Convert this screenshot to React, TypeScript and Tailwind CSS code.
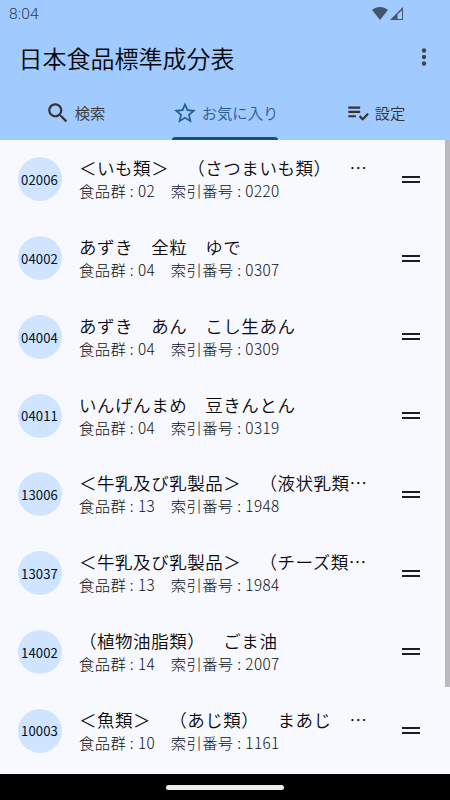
import { useState } from "react";
import clsx from "clsx";

type Food = {
  id: string;
  name: string;
  group: string;
  index: string;
};

const foods: Food[] = [
  { id: "02006", name: "＜いも類＞　（さつまいも類）　…", group: "02", index: "0220" },
  { id: "04002", name: "あずき　全粒　ゆで", group: "04", index: "0307" },
  { id: "04004", name: "あずき　あん　こし生あん", group: "04", index: "0309" },
  { id: "04011", name: "いんげんまめ　豆きんとん", group: "04", index: "0319" },
  { id: "13006", name: "＜牛乳及び乳製品＞　（液状乳類…", group: "13", index: "1948" },
  { id: "13037", name: "＜牛乳及び乳製品＞　（チーズ類…", group: "13", index: "1984" },
  { id: "14002", name: "（植物油脂類）　ごま油", group: "14", index: "2007" },
  { id: "10003", name: "＜魚類＞　（あじ類）　まあじ　…", group: "10", index: "1161" },
];

const tabs = [
  {
    label: "検索",
    path: "M15.5 14h-.79l-.28-.27C15.41 12.59 16 11.11 16 9.5 16 5.91 13.09 3 9.5 3S3 5.91 3 9.5 5.91 16 9.5 16c1.61 0 3.09-.59 4.23-1.57l.27.28v.79l5 4.99L20.49 19l-4.99-5zm-6 0C7.01 14 5 11.99 5 9.5S7.01 5 9.5 5 14 7.01 14 9.5 11.99 14 9.5 14z",
  },
  {
    label: "お気に入り",
    path: "M22 9.24l-7.19-.62L12 2 9.19 8.63 2 9.24l5.46 4.73L5.82 21 12 17.27 18.18 21l-1.63-7.03L22 9.24zM12 15.4l-3.76 2.27 1-4.28-3.32-2.88 4.38-.38L12 6.1l1.71 4.04 4.38.38-3.32 2.88 1 4.28L12 15.4z",
  },
  {
    label: "設定",
    path: "M3 10h11v2H3v-2zm0-4h11v2H3V6zm0 8h7v2H3v-2zm17.590-1.930-4.250 4.240-2.120-2.120-1.410 1.410 3.530 3.540L22 13.480z",
  },
];

const StatusBar = () => (
  <div className="flex h-[26px] items-center justify-between pl-[9px] pr-[47px] text-[#43566c]">
    <span className="pt-[3px] font-[Roboto] text-[15.5px] leading-none font-light tracking-[0.2px] text-[#2b3c52]">
      8:04
    </span>
    <div className="flex items-center gap-[2px]">
      <svg className="h-[13px] w-4" viewBox="0 0 16 13" fill="currentColor">
        <path d="M8 13 0 3C2.200 1 5 0 8 0s5.800 1 8 3z" />
      </svg>
      <svg className="h-[13px] w-[13px]" viewBox="0 0 13 13">
        <path d="M0 13 13 0v13z" fill="currentColor" />
        <path d="M7.500 7.500 12 3.200v8.800H7.500z" fill="#a1caff" />
      </svg>
    </div>
  </div>
);

const FoodRow = ({ food }: { food: Food }) => (
  <li className="flex h-[78.75px] shrink-0 items-center pl-[17.5px] pr-[30px]">
    <div className="flex size-[44px] shrink-0 items-center justify-center rounded-full bg-[#cfe4ff] pt-px text-[13.125px] font-normal tracking-[0.1px] text-[#00101f]">
      {food.id}
    </div>
    <div className="ml-[17.5px] flex-1 whitespace-nowrap pb-[3px] [text-spacing-trim:space-all]">
      <p className="text-[17.5px] leading-[25px] tracking-[0.54px] text-[#08090b]">{food.name}</p>
      <p className="text-[15.3px] leading-[20px] font-light tracking-[0.4px] text-[#0c0f13]">
        食品群 : {food.group}　索引番号 : {food.index}
      </p>
    </div>
    {/* Drag handle */}
    <div className="flex w-[18px] shrink-0 flex-col gap-[3px]">
      <span className="h-[2px] bg-[#1a1c2a]" />
      <span className="h-[2px] bg-[#1a1c2a]" />
    </div>
  </li>
);

export default function App() {
  const [active, setActive] = useState(1);

  return (
    <div className="flex h-[800px] w-[450px] flex-col overflow-hidden bg-[#f8f9ff] font-['Noto_Sans_CJK_JP',sans-serif] font-[350]">
      <header className="h-[140px] shrink-0 border-b border-[#bfc7d3] bg-[#a1caff]">
        <StatusBar />

        <div className="flex h-[62px] items-center justify-between pl-[18.5px] pr-[15px]">
          <h1 className="pt-[2px] text-[24px] leading-none text-[#050709]">日本食品標準成分表</h1>
          <button className="cursor-pointer text-[#42464c]" aria-label="メニュー">
            <svg className="size-[22px]" viewBox="0 0 22 22" fill="currentColor">
              <circle cx="11" cy="4.500" r="2.200" />
              <circle cx="11" cy="11" r="2.200" />
              <circle cx="11" cy="17.500" r="2.200" />
            </svg>
          </button>
        </div>

        <nav className="grid h-[51px] grid-cols-3">
          {tabs.map((tab, i) => (
            <button
              key={tab.label}
              onClick={() => setActive(i)}
              className={clsx(
                "flex cursor-pointer justify-center",
                i === active ? "text-[#27608f]" : "text-[#36332f]"
              )}
            >
              <span className="relative flex h-full items-center gap-1">
                <svg className="mb-[2px] size-[26px]" viewBox="0 0 24 24" fill="currentColor">
                  <path d={tab.path} />
                </svg>
                <span className="pb-px text-[15.3px] leading-none">{tab.label}</span>
                {i === active && (
                  <span className="absolute inset-x-0 bottom-[-1px] h-[3px] rounded-t-[3px] bg-[#1b4f83]" />
                )}
              </span>
            </button>
          ))}
        </nav>
      </header>

      <main className="relative h-[634px] shrink-0 overflow-hidden">
        <ul className="flex flex-col">
          {foods.map((food) => (
            <FoodRow key={food.id} food={food} />
          ))}
        </ul>
        {/* Scroll indicator */}
        <div className="absolute top-0 right-0 h-[547px] w-[5px] bg-[#bbbbbd]" />
      </main>

      <footer className="flex h-[26px] shrink-0 items-center justify-center bg-black">
        <div className="h-[5px] w-[118px] rounded-full bg-[#ececec]" />
      </footer>
    </div>
  );
}
